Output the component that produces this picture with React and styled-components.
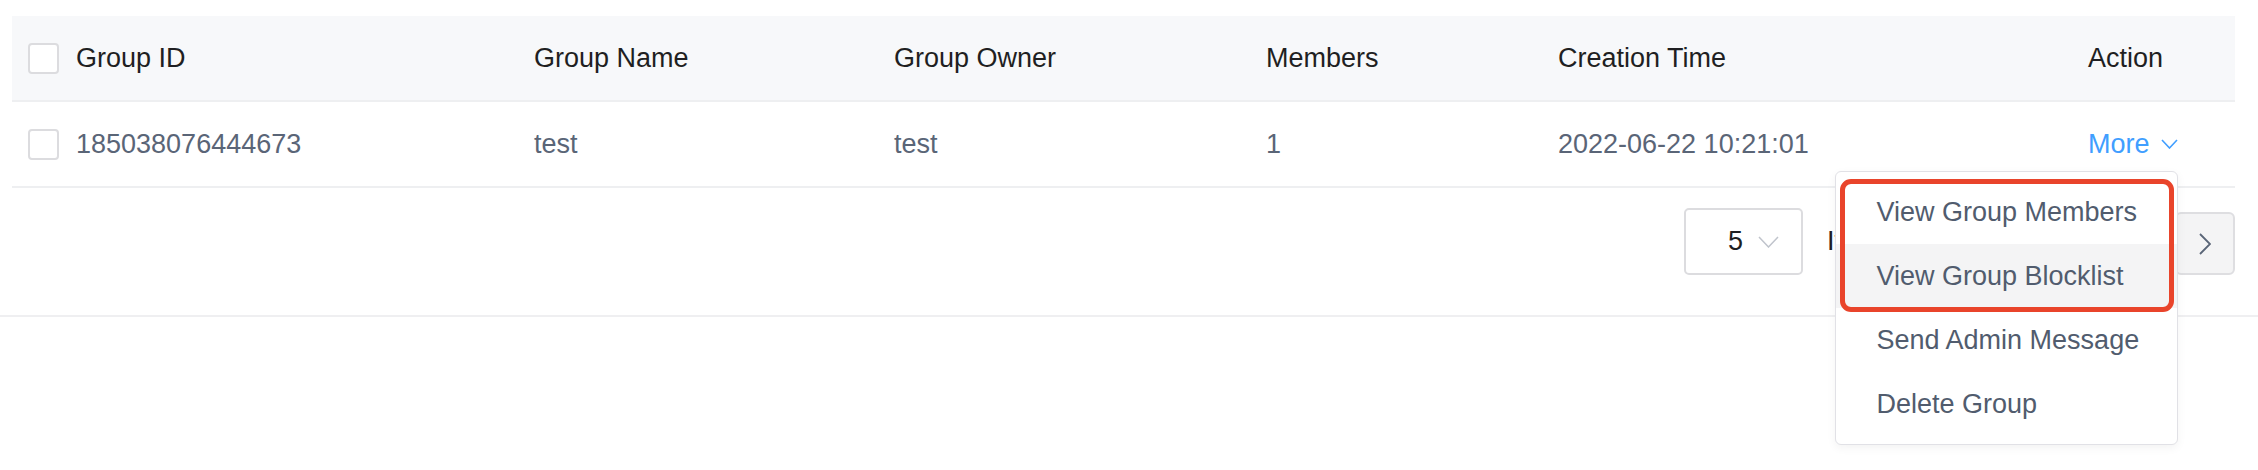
import React from "react";
import styled, { createGlobalStyle } from "styled-components";

const GlobalStyle = createGlobalStyle`
  html, body, #root {
    height: 100%;
  }
  body {
    margin: 0;
    background: #ffffff;
    font-family: "Liberation Sans", Arial, sans-serif;
  }
`;

const COLUMNS = "522px 360px 372px 292px 530px 1fr";

const Screen = styled.div`
  min-height: 100%;
  background: #ffffff;
`;

const Page = styled.div`
  padding-top: 16px;
  border-bottom: 2px solid #efeff1;
`;

const Table = styled.div`
  margin: 0 23px 0 12px;
`;

const Row = styled.div`
  display: grid;
  grid-template-columns: ${COLUMNS};
  height: 84px;
  align-items: center;
  background: ${(p) => (p.$head ? "#f7f8fa" : "#ffffff")};
  border-bottom: 2px solid #eeeff1;
  font-size: 27px;
  color: ${(p) => (p.$head ? "#1f1f22" : "#5a6577")};
`;

const Cell = styled.div`
  display: flex;
  align-items: center;
  gap: 17px;
  padding-left: ${(p) => (p.$first ? "16px" : "0")};
  white-space: nowrap;
`;

const Checkbox = styled.span`
  display: inline-block;
  box-sizing: border-box;
  width: 31px;
  height: 31px;
  border: 2px solid #dcdcdf;
  border-radius: 4px;
  background: #fff;
`;

const Trigger = styled.span`
  position: relative;
  display: inline-flex;
  align-items: center;
  height: 36px;
  gap: 11px;
  color: #409eff;
  cursor: pointer;
`;

const Menu = styled.div`
  position: absolute;
  top: calc(100% + 9px);
  right: 0;
  z-index: 10;
  box-sizing: border-box;
  width: 343px;
  padding: 8px 0;
  background: #fff;
  border: 1px solid #e1e1e6;
  border-radius: 6px;
  box-shadow: 0 3px 10px rgba(0, 0, 0, 0.05);
`;

const MenuItem = styled.div`
  height: 64px;
  display: flex;
  align-items: center;
  padding-left: 41px;
  font-size: 27px;
  color: #515c6e;
  white-space: nowrap;
  background: ${(p) => (p.$active ? "#f4f4f5" : "transparent")};
`;

const Highlight = styled.div`
  position: absolute;
  top: 7px;
  left: 4px;
  width: 334px;
  height: 133px;
  box-sizing: border-box;
  border: 5px solid #e9442b;
  border-radius: 11px;
  pointer-events: none;
`;

const Pagination = styled.div`
  display: flex;
  justify-content: flex-end;
  align-items: flex-start;
  gap: 15px;
  height: 127px;
  box-sizing: border-box;
  padding-top: 20px;
  font-size: 27px;
  color: #1f1f22;
`;

const SizeGroup = styled.div`
  display: flex;
  align-items: center;
  gap: 24px;
  width: 351px;
  white-space: nowrap;
`;

const Select = styled.div`
  box-sizing: border-box;
  width: 119px;
  height: 67px;
  display: flex;
  align-items: center;
  justify-content: flex-end;
  gap: 15px;
  padding-right: 22px;
  border: 2px solid #dcdcdf;
  border-radius: 5px;
`;

const NavGroup = styled.div`
  display: flex;
  align-items: center;
  gap: 15px;
  margin-top: 4px;
`;

const PageButton = styled.div`
  box-sizing: border-box;
  width: 60px;
  height: 63px;
  display: flex;
  align-items: center;
  justify-content: center;
  background: #f4f4f5;
  border: 2px solid #dedee1;
  border-radius: 6px;
  color: #5a6577;
`;

const PageNumber = styled.span`
  width: 35px;
  text-align: center;
  color: #409eff;
`;

function Chevron({ w, h, color, dir = "down", stroke = 1.6 }) {
  const pts =
    dir === "down"
      ? `1,1 ${w / 2},${h - 1} ${w - 1},1`
      : dir === "right"
      ? `1,1 ${w - 1},${h / 2} 1,${h - 1}`
      : `${w - 1},1 1,${h / 2} ${w - 1},${h - 1}`;
  return (
    <svg width={w} height={h} viewBox={`0 0 ${w} ${h}`}>
      <polyline points={pts} fill="none" stroke={color} strokeWidth={stroke} />
    </svg>
  );
}

const menuItems = [
  "View Group Members",
  "View Group Blocklist",
  "Send Admin Message",
  "Delete Group",
];

export default function App() {
  return (
    <>
      <GlobalStyle />
      <Screen>
        <Page>
          <Table>
            <Row $head>
              <Cell $first>
                <Checkbox />
                Group ID
              </Cell>
              <Cell>Group Name</Cell>
              <Cell>Group Owner</Cell>
              <Cell>Members</Cell>
              <Cell>Creation Time</Cell>
              <Cell>Action</Cell>
            </Row>
            <Row>
              <Cell $first>
                <Checkbox />
                185038076444673
              </Cell>
              <Cell>test</Cell>
              <Cell>test</Cell>
              <Cell>1</Cell>
              <Cell>2022-06-22 10:21:01</Cell>
              <Cell>
                <Trigger>
                  More
                  <Chevron w={17} h={10} color="#409eff" />
                  <Menu>
                    {menuItems.map((label, i) => (
                      <MenuItem key={label} $active={i === 1}>
                        {label}
                      </MenuItem>
                    ))}
                    <Highlight />
                  </Menu>
                </Trigger>
              </Cell>
            </Row>
            <Pagination>
              <SizeGroup>
                <Select>
                  5
                  <Chevron w={21} h={12} color="#c0c4cc" stroke={1.5} />
                </Select>
                Items/page
              </SizeGroup>
              <NavGroup>
                <PageButton>
                  <Chevron w={12} h={22} color="#5a6577" dir="left" stroke={1.8} />
                </PageButton>
                <PageNumber>1</PageNumber>
                <PageButton>
                  <Chevron w={12} h={22} color="#5a6577" dir="right" stroke={1.8} />
                </PageButton>
              </NavGroup>
            </Pagination>
          </Table>
        </Page>
      </Screen>
    </>
  );
}
